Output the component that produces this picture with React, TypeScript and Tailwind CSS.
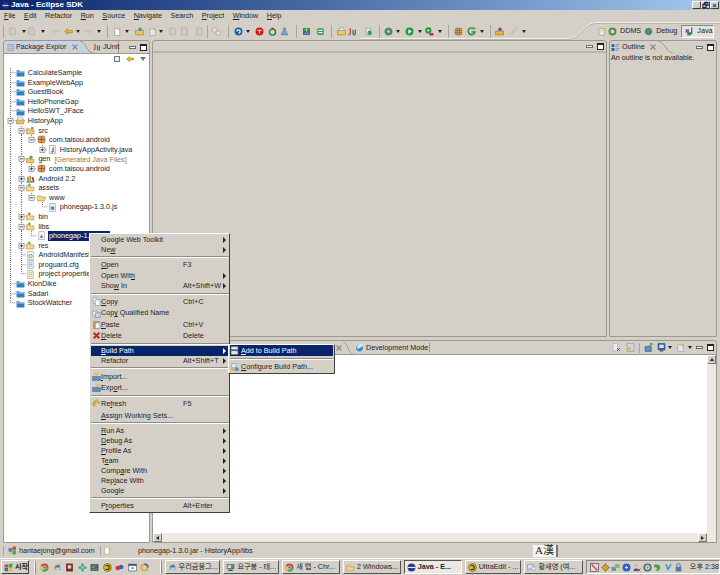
import type { ReactNode } from 'react';

const icons: Record<string, ReactNode> = {
  project: <><path d="M1 4h5l1 2h8v9H1z" fill="#2f7fc4" /><path d="M1 6h14v2H1z" fill="#9cc8ea" /></>,
  projectOpen: <><path d="M3 2h9v6H3z" fill="#fff" stroke="#7a8a9a" /><path d="M1 7h14l-2 7H1z" fill="#e9c45c" stroke="#8a7a3a" /></>,
  srcFolder: <><path d="M1 5h5l1 2h7v7H1z" fill="#f0cc70" stroke="#9a7a30" /><circle cx="11" cy="4" r="2.5" fill="#d8862c" /></>,
  genFolder: <><path d="M1 6h5l1 2h7v6H1z" fill="#f0cc70" stroke="#9a7a30" /><circle cx="9" cy="4" r="3" fill="#6ea040" /></>,
  folder: <><path d="M1 5h5l1 2h7v7H1z" fill="#f3d88a" stroke="#a08a40" /><circle cx="6" cy="3.5" r="2.4" fill="#7aa850" /></>,
  plainFolder: <path d="M1 5h5l1 2h8l-2 7H1z" fill="#f3d88a" stroke="#a08a40" />,
  pkg: <><rect x="2" y="2" width="12" height="12" rx="3" fill="#d99a5a" stroke="#8a4a1a" /><path d="M8 2v12M2 8h12" stroke="#7a3a10" /></>,
  java: <><path d="M3 1h10v14H3z" fill="#fff" stroke="#8a7a40" /><path d="M9 4v7q0 2-3 1" fill="none" stroke="#2a4a9a" strokeWidth="2" /></>,
  js: <><path d="M3 1h10v14H3z" fill="#eef4fa" stroke="#7a8aa0" /><path d="M5 6h6v6H5z" fill="#4a8ac8" /></>,
  jar: <><path d="M3 1h10v14H3z" fill="#fff" stroke="#8a8a9a" /><path d="M5 12l3-6 3 6z" fill="#5a6a9a" /></>,
  lib: <><path d="M1 13h14v2H1z" fill="#3a6a9a" /><path d="M2 5h3v8H2z" fill="#7a9a3a" /><path d="M6 3h3v10H6z" fill="#c88a2a" /><path d="M10 6l3-1 2 8h-3z" fill="#a03a2a" /></>,
  xml: <><path d="M3 1h10v14H3z" fill="#fff" stroke="#8a9a8a" /><circle cx="8" cy="9" r="3" fill="none" stroke="#4a9a4a" strokeWidth="1.6" /></>,
  file: <><path d="M3 1h10v14H3z" fill="#eaf0f8" stroke="#8a9ab0" /><path d="M5 5h6M5 8h6M5 11h6" stroke="#7a8ab0" /></>,
  prop: <><path d="M3 1h10v14H3z" fill="#f8f0d8" stroke="#a09a70" /><path d="M5 5h6M5 8h6M5 11h6" stroke="#b0a060" /></>,
  grayDoc: <path d="M3 2h8l2 2v10H3z" fill="#cfccc4" stroke="#a8a49c" />,
  grayArrow: <path d="M2 8l5-4v2.5h7v3H7V12z" fill="#c4c0b8" />,
  grayArrowR: <path d="M14 8l-5-4v2.5H2v3h7V12z" fill="#c4c0b8" />,
  yellowArrow: <path d="M1 8l6-5v3h8v4H7v3z" fill="#e8b830" stroke="#a07a10" />,
  newFile: <><path d="M3 3h9v12H3z" fill="#fff" stroke="#8a8a7a" /><path d="M11 1l1 2 2 1-2 1-1 2-1-2-2-1 2-1z" fill="#e8b820" /></>,
  pkgNew: <><path d="M1 6h14v8H1z" fill="#e9c45c" stroke="#8a7a3a" /><circle cx="9" cy="4" r="3" fill="#4a8ac8" /></>,
  fileNew: <><path d="M3 3h10v12H3z" fill="#dfe8f2" stroke="#8a9ab0" /><path d="M11 1l1 2 2 1-2 1-1 2-1-2-2-1 2-1z" fill="#e8b820" /></>,
  grayBoxes: <path d="M1 2h8v7H1zM7 7h8v7H7z" fill="#e4e2dc" stroke="#a4a09a" />,
  blue: <><circle cx="8" cy="8" r="7" fill="#1f5fa8" /><path d="M5 8a3 3 0 1 1 3 3" fill="none" stroke="#fff" strokeWidth="2" /></>,
  red: <><circle cx="8" cy="8" r="7" fill="#d01818" /><path d="M4 6h8M8 6v6" stroke="#fff" strokeWidth="1.5" /></>,
  greenRing: <><circle cx="8" cy="9" r="5.5" fill="none" stroke="#1a8a3a" strokeWidth="2.5" /><circle cx="8" cy="3" r="2" fill="#d03020" /></>,
  flask: <><path d="M6 2h4v4l4 8H2l4-8z" fill="#7aa0d0" stroke="#4a6a9a" /></>,
  addGreen: <><path d="M2 2h12v12H2z" fill="#2a5a8a" /><path d="M8 1v8M4 5h8" stroke="#8ad04a" strokeWidth="2" /><path d="M4 11h8" stroke="#fff" /></>,
  dev: <><rect x="2" y="2" width="12" height="12" rx="2" fill="#3a9a5a" /><path d="M4 6h8M4 10h8" stroke="#e8f0d0" strokeWidth="2" /></>,
  suitcase: <><path d="M1 6h14v8H1z" fill="#e8c860" stroke="#8a7a30" /><path d="M4 2h8v4H4z" fill="#fff" stroke="#6a8aaa" /></>,
  ju: <><path d="M4 2v9q0 3-3 2" fill="none" stroke="#d04030" strokeWidth="2.4" /><path d="M9 5v7q0 2 2 2t2-2V5" fill="none" stroke="#2a8a3a" strokeWidth="2.4" /></>,
  manGreen: <><path d="M3 2h9v12H3z" fill="#dfe8f2" stroke="#7a8a9a" /><circle cx="10" cy="10" r="4" fill="#3a9a5a" /></>,
  gear: <><circle cx="8" cy="8" r="6" fill="#5a9a7a" stroke="#2a5a4a" strokeDasharray="2 1" strokeWidth="2" /><circle cx="8" cy="8" r="2" fill="#d8e8c8" /></>,
  play: <><circle cx="8" cy="8" r="7" fill="#1f9a3a" /><path d="M6 4l6 4-6 4z" fill="#fff" /></>,
  runExt: <><circle cx="6" cy="6" r="5.5" fill="#1f9a3a" /><path d="M4.500 3.500l4 2.500-4 2.500z" fill="#fff" /><path d="M8 11h7v4H8z" fill="#c02020" /></>,
  grid: <><rect x="2" y="2" width="12" height="12" rx="3" fill="#d8a860" stroke="#8a5a20" /><path d="M6 2v12M10 2v12M2 6h12M2 10h12" stroke="#8a4a20" /></>,
  pkgView: <><path d="M2 1h12v14H2z" fill="#c8d0da" stroke="#6a7a9a" /><path d="M4 4h3v3H4zM4 9h3v3H4z" fill="#d89a3a" /><path d="M9 5h4M9 10h4" stroke="#3a5a9a" /></>,
  gColor: <><path d="M13 4a6 6 0 1 0 1 5H8" fill="none" stroke="#2a8a3a" strokeWidth="2.6" /><path d="M12 1h3v3z" fill="#d04030" /></>,
  briefcase: <><path d="M1 7h14v7H1z" fill="#e8b830" stroke="#8a6a20" /><circle cx="9" cy="4" r="3" fill="#6a4ab0" /></>,
  brush: <><path d="M2 14l3-5 3 3z" fill="#e8c050" /><path d="M6 8l7-7 2 2-7 7z" fill="#e8dcb0" stroke="#a09a70" /></>,
  persp: <><path d="M2 3h9v11H2z" fill="#fff" stroke="#7a7a6a" /><path d="M4 6h5M4 9h5" stroke="#5a8aba" /><path d="M12 1l1 2 2 1-2 1-1 2-1-2-2-1 2-1z" fill="#e8b820" /></>,
  ddms: <><circle cx="8" cy="8" r="7" fill="#5a8a4a" /><circle cx="8" cy="8" r="3.500" fill="#d8d4c8" /></>,
  debug: <><circle cx="8" cy="8" r="5" fill="#5a9a6a" stroke="#2a6a5a" strokeDasharray="2 1" strokeWidth="3" /></>,
  persJava: <><path d="M1 4h6v6H1z" fill="#7a5ab0" /><path d="M4 9h6v6H4z" fill="#3a8a4a" /><path d="M12 1v9q0 3-3 2" fill="none" stroke="#2a4aa0" strokeWidth="2" /></>,
  outline: <><path d="M1 2h5v5H1zM1 9h5v5H1z" fill="#2a5ab0" /><path d="M8 3h7M8 6h5M8 10h7M8 13h5" stroke="#6a8ac0" strokeWidth="1.500" /></>,
  copy: <><path d="M2 1h7v10H2z" fill="#e8eef8" stroke="#7a8aa8" /><path d="M6 5h8v10H6z" fill="#fff" stroke="#7a8aa8" /></>,
  copyQ: <><path d="M1 4h9v8H1z" fill="#e8eef8" stroke="#7a8aa8" /><path d="M6 7h9v8H6z" fill="#c8d8ea" stroke="#5a7a9a" /></>,
  paste: <><path d="M3 3h10v12H3z" fill="#d8a860" stroke="#8a6a30" /><path d="M6 5h8v10H6z" fill="#f0f4fa" stroke="#7a8aa8" /></>,
  del: <path d="M3 3l10 10M13 3L3 13" stroke="#d02020" strokeWidth="3.600" />,
  imp: <><path d="M1 8h14v7H1z" fill="#5a92c8" stroke="#3a6a9a" /><path d="M4 1l4 5 4-5" fill="none" stroke="#e8b830" strokeWidth="2" /></>,
  exp: <><path d="M1 8h14v7H1z" fill="#5a92c8" stroke="#3a6a9a" /><path d="M8 7l4-5M9 2h3v3" fill="none" stroke="#e8b830" strokeWidth="2" /></>,
  refresh: <><path d="M8 1l6 6-3 1-3-3-3 3 2 2-3 3-3-5z" fill="#e8b830" stroke="#9a7a20" /></>,
  addPath: <><path d="M2 1h12v14H2z" fill="#f0e8c8" stroke="#7a7a6a" /><path d="M2 6h12v3H2z" fill="#3a5a9a" /></>,
  confPath: <><path d="M3 1h8v7H3z" fill="#e8eef8" stroke="#7a8aa8" /><circle cx="5" cy="11" r="3.500" fill="#e8b830" /><circle cx="12" cy="11" r="3.500" fill="#5a92c8" /></>,
  globe: <><circle cx="8" cy="9" r="6" fill="#3a8ac8" /><path d="M4 5q8-6 11-2-3 5-11 8z" fill="#d8e8f4" /></>,
  clearDoc: <><path d="M2 1h8v13H2z" fill="#e8eef8" stroke="#9aa8b8" /><path d="M9 9l5 5M14 9l-5 5" stroke="#4a4a4a" strokeWidth="1.500" /></>,
  lockDoc: <><path d="M2 1h12v14H2z" fill="#c8d8ea" stroke="#7a8aa8" /><rect x="3" y="7" width="6" height="6" fill="#e8b830" /></>,
  pin: <><path d="M2 6h11v9H2z" fill="#5a92c8" stroke="#2a5a8a" /><path d="M8 6l6-5M11 1h3v3" fill="none" stroke="#2a8a3a" strokeWidth="1.600" /></>,
  monitor: <><path d="M2 1h12v11H2z" fill="#2a5ab0" stroke="#1a3a7a" /><path d="M4 3h8v6H4z" fill="#d8e4f4" /><path d="M5 14h6" stroke="#444" strokeWidth="2" /></>,
  gmail: <><path d="M1 4h6v6H1z" fill="#3a7ad8" /><path d="M8 1h6v6H8z" fill="#d84030" /><path d="M8 8h6v7H8z" fill="#3aa84a" /><path d="M2 11h5v4H2z" fill="#e8c030" /></>,
  tip: <><path d="M3 2h8v13H3z" fill="#fff" stroke="#9a9a8a" /><path d="M13 2l1 2 2 1-2 1-1 2-1-2-2-1 2-1z" fill="#e8c040" /></>,
  winFlag: <><path d="M1 3l6-1v6H1z" fill="#d84030" /><path d="M8 2l7-1v7H8z" fill="#3aa84a" /><path d="M1 9h6v6l-6-1z" fill="#2a6ad0" /><path d="M8 9h7v6l-7-1z" fill="#e8c030" /></>,
  chrome: <><circle cx="8" cy="8" r="7" fill="#d84030" /><path d="M8 8L15 8A7 7 0 0 1 5 14z" fill="#3aa84a" /><path d="M8 8L1 5A7 7 0 0 0 5 14z" fill="#e8c030" /><circle cx="8" cy="8" r="3" fill="#3a7ad8" stroke="#fff" /></>,
  ie: <><path d="M3 8a5 5 0 0 1 10 0H5a3.500 3.500 0 0 0 7 2h2a6 6 0 0 1-11-2z" fill="#2a7ad8" /><path d="M1 14Q3 4 14 1" fill="none" stroke="#e8a820" /></>,
  book: <><rect x="2" y="1" width="12" height="14" fill="#7a2a2a" /><rect x="5" y="4" width="6" height="6" fill="#e8d8b0" /></>,
  flower: <><path d="M8 1v14M1 8h14" stroke="#2aa8a0" strokeWidth="4" /><circle cx="8" cy="8" r="2" fill="#e8e040" /></>,
  films: <><rect x="1" y="2" width="14" height="12" fill="#3a5a5a" /><path d="M3 5h10M3 8h6M3 11h10" stroke="#a8d0b0" /></>,
  ultra: <><circle cx="8" cy="8" r="7" fill="#e8b820" stroke="#3a3a20" /><path d="M5 5q6-2 6 3t-6 3" fill="none" stroke="#2a2a10" strokeWidth="2" /></>,
  swirl: <><circle cx="5" cy="9" r="4" fill="#d83040" /><circle cx="11" cy="7" r="4" fill="#3a5ad0" /></>,
  winBox: <><path d="M1 2h14v12H1z" fill="#fff" stroke="#3a3a3a" /><path d="M1 2h14v3H1z" fill="#2a4a90" /><path d="M5 9h6" stroke="#3a9a3a" strokeWidth="2" /></>,
  ring: <><circle cx="8" cy="8" r="5.500" fill="none" stroke="#e8a820" strokeWidth="3" /><path d="M8 2a6 6 0 0 1 6 6" fill="none" stroke="#2a6ad0" strokeWidth="3" /></>,
  pc: <><path d="M1 2h14v9H1z" fill="#5a7a9a" /><path d="M3 4h6v5H3z" fill="#d8e8a8" /><path d="M4 13h8" stroke="#333" strokeWidth="2" /></>,
  chat: <><path d="M1 3h10v7H5l-3 3v-3H1z" fill="#dfe8f8" stroke="#5a7ab0" /><path d="M8 7h7v5h-1v2l-2-2H8z" fill="#eef4fa" stroke="#7a9ac0" /></>,
  eclipse: <><circle cx="8" cy="8" r="7" fill="#2a3a8a" /><path d="M1 7h14v2H1z" fill="#e8e8f0" /></>,
  trayRed: <><rect x="1" y="1" width="14" height="14" fill="#f0d8d8" stroke="#2a2a2a" /><path d="M3 3l10 10" stroke="#d02020" strokeWidth="2" /></>,
  trayCross: <path d="M8 1l3 4 4 3-4 3-3 4-3-4-4-3 4-3z" fill="#e8a020" stroke="#5a3a10" />,
  trayNet: <><rect x="1" y="7" width="8" height="7" fill="#5a92b8" /><rect x="7" y="2" width="8" height="7" fill="#7ab86a" /></>,
  trayBlue: <><circle cx="8" cy="8" r="7" fill="#2a5ad0" /><path d="M9 3L5 9h3l-1 4 4-6H8z" fill="#fff" /></>,
  trayUser: <><circle cx="7" cy="4" r="3" fill="#e8b080" /><path d="M2 14q5-9 10 0z" fill="#2a5ab0" /><path d="M10 10l5 5M15 10l-5 5" stroke="#d02020" strokeWidth="1.500" /></>,
  trayGray: <><circle cx="8" cy="8" r="6" fill="none" stroke="#4a6a6a" strokeWidth="2.600" /><circle cx="8" cy="8" r="2" fill="#7a9a8a" /></>,
  trayLeaf: <path d="M3 2q10 0 10 6t-9 6q6-6 1-6T3 2z" fill="#4aa04a" />,
  trayV: <path d="M2 2l5 12L14 2h-3l-4 7-2-7z" fill="#3a8ad8" />,
  trayLock: <><path d="M5 7V4a3 3 0 0 1 6 0v3" fill="none" stroke="#5a6a8a" strokeWidth="1.600" /><rect x="3" y="7" width="10" height="8" fill="#4a7ab0" /></>,
};

function Ico({ k, size = 9 }: { k: string; size?: number }) {
  return (
    <svg width={size} height={size} viewBox="0 0 16 16" className="shrink-0">
      {icons[k]}
    </svg>
  );
}

function Caret() {
  return (
    <svg width="4" height="3" viewBox="0 0 4 3" className="shrink-0">
      <path d="M0 0h4L2 3z" fill="#222" />
    </svg>
  );
}

// small X of a closable view tab
function CloseX() {
  return (
    <svg width="6" height="6" viewBox="0 0 6 6" className="shrink-0">
      <path d="M0.500 0.500l5 5M5.500 0.500l-5 5" stroke="#8a8a84" strokeWidth="1.200" />
    </svg>
  );
}

// sloping right edge of a selected tab
function TabEnd({ w, fill }: { w: number; fill: string }) {
  return (
    <svg width={w} height="12" viewBox={`0 0 ${w} 12`} className="shrink-0">
      <path d={`M0 0C${w * 0.45} 0 ${w * 0.55} 12 ${w} 12H0Z`} fill={fill} />
      <path d={`M0 0C${w * 0.45} 0 ${w * 0.55} 12 ${w} 12`} fill="none" stroke="#9c9890" />
    </svg>
  );
}

const toolbar: [number, string][] = [
  [3, '|'], [12, 'grayDoc'], [24, 'v'], [31, 'grayDoc'], [43, 'v'], [55, 'grayArrow'], [68, 'yellowArrow'], [78, 'v'],
  [88, 'grayArrowR'], [99, 'v'], [107, '|'], [117, 'newFile'], [127, 'v'], [139, 'pkgNew'], [152, 'fileNew'], [161, 'v'],
  [172, 'grayDoc'], [184, 'grayDoc'], [199, 'grayDoc'], [207, '|'], [216, 'grayBoxes'], [228, '|'], [238, 'blue'], [248, 'v'],
  [259, 'red'], [272, 'greenRing'], [284, 'flask'], [296, '|'], [306, 'addGreen'], [320, 'dev'], [331, '|'], [341, 'suitcase'],
  [352, 'ju'], [368, 'manGreen'], [379, '|'], [388, 'gear'], [398, 'v'], [409, 'play'], [420, 'v'], [429, 'runExt'], [440, 'v'],
  [448, '|'], [458, 'grid'], [471, 'gColor'], [482, 'v'], [490, '|'], [499, 'briefcase'], [513, 'brush'], [524, 'v'],
];

function Toolbar() {
  return (
    <div className="flex h-[18px] items-center">
      {toolbar.map(([x, k], i) => {
        const w = k === '|' ? 1 : k === 'v' ? 4 : 9;
        const prev = i === 0 ? null : toolbar[i - 1];
        const prevW = prev ? (prev[1] === '|' ? 1 : prev[1] === 'v' ? 4 : 9) : 0;
        const prevLeft = prev ? prev[0] - prevW / 2 : 0;
        const gap = x - w / 2 - (prevLeft + prevW);
        return (
          <span key={i} className="flex items-center" style={{ marginLeft: gap }}>
            {k === '|' ? <span className="h-[13px] w-px bg-[#a8a49c]" /> : k === 'v' ? <Caret /> : <Ico k={k} />}
          </span>
        );
      })}
    </div>
  );
}

function MinMax() {
  return (
    <div className="flex items-center gap-[4px] pr-[2px]">
      <span className="h-[3px] w-[7px] border border-[#6a6a6a] bg-white" />
      <span className="h-[7px] w-[7px] border border-[#222] border-t-2 bg-white" />
    </div>
  );
}

type Row = {
  t: string;
  guides?: boolean[];
  node?: 'plus' | 'minus' | 'leaf';
  last?: boolean;
  icon: string;
  note?: string;
  selected?: boolean;
};

const rows: Row[] = [
  { t: 'CalculateSample', icon: 'project' },
  { t: 'ExampleWebApp', icon: 'project' },
  { t: 'GuestBook', icon: 'project' },
  { t: 'HelloPhoneGap', icon: 'project' },
  { t: 'HelloSWT_JFace', icon: 'project' },
  { t: 'HistoryApp', icon: 'projectOpen', node: 'minus' },
  { t: 'src', icon: 'srcFolder', node: 'minus', guides: [true] },
  { t: 'com.taisou.android', icon: 'pkg', node: 'minus', guides: [true, true], last: true },
  { t: 'HistoryAppActivity.java', icon: 'java', node: 'plus', guides: [true, true, false], last: true },
  { t: 'gen', note: '[Generated Java Files]', icon: 'genFolder', node: 'minus', guides: [true] },
  { t: 'com.taisou.android', icon: 'pkg', node: 'plus', guides: [true, true], last: true },
  { t: 'Android 2.2', icon: 'lib', node: 'plus', guides: [true] },
  { t: 'assets', icon: 'folder', node: 'minus', guides: [true] },
  { t: 'www', icon: 'plainFolder', node: 'minus', guides: [true, true], last: true },
  { t: 'phonegap-1.3.0.js', icon: 'js', guides: [true, true, false], last: true },
  { t: 'bin', icon: 'folder', node: 'plus', guides: [true] },
  { t: 'libs', icon: 'folder', node: 'minus', guides: [true] },
  { t: 'phonegap-1.3.0.jar', icon: 'jar', guides: [true, true], last: true, selected: true },
  { t: 'res', icon: 'folder', node: 'plus', guides: [true] },
  { t: 'AndroidManifest.xml', icon: 'xml', guides: [true] },
  { t: 'proguard.cfg', icon: 'file', guides: [true] },
  { t: 'project.properties', icon: 'prop', guides: [true], last: true },
  { t: 'KlonDike', icon: 'project' },
  { t: 'Sadari', icon: 'project' },
  { t: 'StockWatcher', icon: 'project', last: true },
];

function Connector({ guide, end, node, last }: { guide?: boolean; end?: boolean; node?: Row['node']; last?: boolean }) {
  const box = node === 'plus' || node === 'minus';
  return (
    <svg width="10.7" height="9.6" viewBox="0 0 10.7 9.6" className="shrink-0">
      {guide && <path d="M5.500 0V9.600" stroke="#777" strokeDasharray="1 1" />}
      {end && <path d={last ? 'M5.500 0V4.800H10.700' : 'M5.500 0V9.600M5.500 4.800H10.700'} fill="none" stroke="#777" strokeDasharray="1 1" />}
      {box && <rect x="3" y="2.300" width="5" height="5" fill="#fff" stroke="#888" strokeWidth="0.8" />}
      {box && <path d="M4 4.800h3" stroke="#222" strokeWidth="0.8" />}
      {node === 'plus' && <path d="M5.500 3.300v3" stroke="#222" strokeWidth="0.8" />}
    </svg>
  );
}

function Tree() {
  return (
    <div className="flex flex-col pl-px">
      {rows.map((r, i) => (
        <div key={i} className="flex h-[9.6px] items-center">
          {(r.guides ?? []).map((g, j) => (
            <Connector key={j} guide={g} />
          ))}
          <Connector end node={r.node} last={r.last} />
          <Ico k={r.icon} />
          <span className={`ml-[2px] whitespace-nowrap px-px leading-[9.6px] ${r.selected ? 'bg-[#0a246a] text-white' : ''}`}>{r.t}</span>
          {r.note && <span className="ml-[3px] whitespace-nowrap text-[#8a7a50]">{r.note}</span>}
        </div>
      ))}
    </div>
  );
}

type MenuEntry = { l?: string; u?: string; s?: string; sub?: boolean; icon?: string; hi?: boolean; h?: string };

const menu: MenuEntry[] = [
  { l: 'Google Web Toolkit', sub: true },
  { l: 'Ne', u: 'w', sub: true },
  {},
  { u: 'O', l: 'pen', s: 'F3', h: 'h-[10.500px]' },
  { l: 'Open Wit', u: 'h', sub: true, h: 'h-[10.500px]' },
  { l: 'Sho', u: 'w', s: 'Alt+Shift+W', sub: true, h: 'h-[10.500px]' },
  {},
  { u: 'C', l: 'opy', s: 'Ctrl+C', icon: 'copy', h: 'h-[11.300px]' },
  { l: 'Cop', u: 'y', s: '', icon: 'copyQ', h: 'h-[11.300px]' },
  { u: 'P', l: 'aste', s: 'Ctrl+V', icon: 'paste', h: 'h-[11.300px]' },
  { u: 'D', l: 'elete', s: 'Delete', icon: 'del', h: 'h-[11.300px]' },
  {},
  { u: 'B', l: 'uild Path', sub: true, hi: true },
  { l: 'Refactor', s: 'Alt+Shift+T', sub: true },
  {},
  { u: 'I', l: 'mport...', icon: 'imp', h: 'h-[11.300px]' },
  { l: 'Exp', u: 'o', s: '', icon: 'exp', h: 'h-[11.300px]' },
  {},
  { l: 'Re', u: 'f', s: 'F5', icon: 'refresh', h: 'h-[11.300px]' },
  { u: 'A', l: 'ssign Working Sets...', h: 'h-[11.300px]' },
  {},
  { u: 'R', l: 'un As', sub: true },
  { u: 'D', l: 'ebug As', sub: true },
  { u: 'P', l: 'rofile As', sub: true },
  { l: 'T', u: 'e', sub: true },
  { l: 'Comp', u: 'a', sub: true },
  { l: 'Rep', u: 'l', sub: true },
  { l: 'Google', sub: true },
  {},
  { l: 'P', u: 'r', s: 'Alt+Enter' },
];

const tails: Record<string, string> = {
  'Sho': ' In',
  'Cop': ' Qualified Name',
  'Exp': 'rt...',
  'Re': 'resh',
  'T': 'am',
  'Comp': 're With',
  'Rep': 'ace With',
  'P': 'operties',
};

function MenuRow({ e }: { e: MenuEntry }) {
  if (!e.l && !e.u) {
    return <div className="my-[1.400px] h-[2px] border-t border-b border-t-[#8f8c85] border-b-white" />;
  }
  const first = e.u && e.l && e.u === e.u.toUpperCase();
  return (
    <div className={`flex items-center pr-[3px] ${e.h ?? 'h-[10px]'} ${e.hi ? 'bg-[#0a246a] text-white' : ''}`}>
      <span className="flex w-[10px] justify-center">{e.icon && <Ico k={e.icon} />}</span>
      <span className="w-[82px] whitespace-nowrap">
        {first ? (
          <>
            <u>{e.u}</u>
            {e.l}
          </>
        ) : (
          <>
            {e.l}
            {e.u && <u>{e.u}</u>}
            {e.l && tails[e.l]}
          </>
        )}
      </span>
      <span className="flex-1 whitespace-nowrap">{e.s}</span>
      {e.sub && <span className="h-0 w-0 border-y-[3px] border-l-[3px] border-y-transparent border-l-current" />}
    </div>
  );
}

function ContextMenu() {
  return (
    <div className="absolute left-[89px] top-[233px] w-[141px] border border-t-white border-l-white border-r-[#404040] border-b-[#404040] bg-[#d4d0c8] pb-[2px] pl-px pt-px text-[#222]">
      {menu.map((e, i) => (
        <MenuRow key={i} e={e} />
      ))}
    </div>
  );
}

function SubMenu() {
  return (
    <div className="absolute left-[228px] top-[344px] w-[107px] border border-t-white border-l-white border-r-[#404040] border-b-[#404040] bg-[#d4d0c8] px-px text-[#222]">
      <div className="flex h-[11px] items-center gap-[2px] bg-[#0a246a] text-white">
        <Ico k="addPath" />
        <span className="whitespace-nowrap">
          <u>A</u>dd to Build Path
        </span>
      </div>
      <div className="my-[1.500px] h-[2px] border-t border-b border-t-[#8f8c85] border-b-white" />
      <div className="flex h-[12px] items-center gap-[2px]">
        <Ico k="confPath" />
        <span className="whitespace-nowrap">
          <u>C</u>onfigure Build Path...
        </span>
      </div>
    </div>
  );
}

function Task({ icon, label, w, active }: { icon: string; label: string; w: string; active?: boolean }) {
  return (
    <div
      className={`flex h-[14px] items-center gap-[2px] overflow-hidden whitespace-nowrap border px-[2px] ${w} ${
        active
          ? 'border-t-[#555] border-l-[#555] border-r-white border-b-white bg-[#ece9e2] font-bold'
          : 'border-t-white border-l-white border-r-[#555] border-b-[#555]'
      }`}
    >
      <Ico k={icon} />
      <span>{label}</span>
    </div>
  );
}

const quick = ['chrome', 'ie', 'book', 'flower', 'films', 'ultra', 'swirl', 'winBox', 'ring'];
const tray = ['trayCross', 'trayNet', 'trayBlue', 'trayUser', 'trayGray', 'trayLeaf', 'trayV', 'trayLock'];

export default function App() {
  return (
    <div className="relative flex h-[575px] w-[720px] flex-col overflow-hidden bg-[#d4d0c8] font-['Liberation_Sans','Noto_Sans_CJK_KR',sans-serif] text-[7.200px] leading-none text-[#222]">
      <div className="flex h-[10px] items-center justify-between bg-gradient-to-r from-[#0a246a] to-[#a6caf0] pl-[2px] pr-px text-[8px] font-bold text-white">
        <div className="flex items-center gap-[2px]">
          <Ico k="eclipse" size={7} />
          <span>Java - Eclipse SDK</span>
        </div>
        <div className="flex text-[#222]">
          {['_', '🗗', '×'].map((c) => (
            <span key={c} className="flex h-[8px] w-[9px] items-center justify-center border border-t-white border-l-white border-r-[#404040] border-b-[#404040] bg-[#d4d0c8] text-[7px]">
              {c}
            </span>
          ))}
        </div>
      </div>

      <div className="flex h-[12px] items-center gap-[8.500px] pl-[4px]">
        {[['F', 'ile'], ['E', 'dit'], ['', 'Refactor'], ['R', 'un'], ['S', 'ource'], ['N', 'avigate'], ['', 'Search'], ['P', 'roject'], ['W', 'indow'], ['H', 'elp']].map(([u, r]) => (
          <span key={r} className="whitespace-nowrap">
            <u>{u}</u>
            {r}
          </span>
        ))}
      </div>

      <div className="relative">
        <svg width="720" height="18" viewBox="0 0 720 18" className="absolute left-0 top-0">
          <path d="M360 16.500H568C582 16.500 582 0.500 597 0.500H720" fill="none" stroke="#f4f2ec" />
          <path d="M360 17.500H568C582 17.500 582 1.500 597 1.500H720" fill="none" stroke="#b8b4ac" />
        </svg>
        <div className="relative">
          <Toolbar />
        </div>
        <div className="absolute left-[598px] top-0 flex h-[18px] items-center">
          <Ico k="persp" />
          <div className="ml-[1px] flex items-center gap-[3px]">
            <Ico k="ddms" />
            DDMS
          </div>
          <div className="ml-[3px] flex items-center gap-[3px]">
            <Ico k="debug" />
            Debug
          </div>
          <div className="ml-[4px] flex h-[13px] w-[33px] items-center gap-[3px] border border-t-[#888] border-l-[#888] border-r-white border-b-white bg-[#e6e3dc] px-[3px]">
            <Ico k="persJava" />
            Java
          </div>
        </div>
      </div>

      <div className="flex min-h-0 flex-1 gap-[2px] pl-[3px] pr-[3px]">
        <section className="flex w-[147px] flex-col overflow-hidden rounded-t-[3px] border border-[#9c9890]">
          <div className="flex h-[12px] items-center justify-between">
            <div className="flex h-full">
              <div className="flex w-[76px] items-center gap-[2px] rounded-tl-[3px] bg-gradient-to-b from-[#c3d4ee] to-[#d0d0cc] pl-[3px]">
                <Ico k="pkgView" size={7} />
                <span className="whitespace-nowrap">Package Explor</span>
                <span className="ml-[4px]">
                  <CloseX />
                </span>
              </div>
              <TabEnd w={13} fill="#c9d0da" />
              <div className="flex w-[26px] items-center gap-[2px] border-r border-[#9c9890]">
                <Ico k="ju" size={8} />
                JUnit
              </div>
            </div>
            <MinMax />
          </div>
          <div className="flex-1 overflow-hidden border-t border-[#9c9890] bg-white">
            <div className="flex h-[10px] items-center justify-end gap-[6px] pr-[3px]">
              <span className="h-[6px] w-[6px] border border-[#6a7a8a] bg-[#e8eef6]" />
              <Ico k="yellowArrow" size={8} />
              <span className="h-0 w-0 border-x-[3px] border-t-[4px] border-x-transparent border-t-[#777]" />
            </div>
            <div className="h-[4px]" />
            <Tree />
          </div>
        </section>

        <div className="flex min-w-0 flex-1 flex-col gap-[3px]">
          <div className="flex h-[297px] gap-[2px]">
            <section className="flex w-[455px] flex-col rounded-t-[3px] border border-[#9c9890]">
              <div className="flex h-[12px] items-center justify-end border-b-2 border-[#b8b4ac]">
                <MinMax />
              </div>
              <div className="flex-1" />
            </section>
            <section className="flex min-w-0 flex-1 flex-col rounded-t-[3px] border border-[#9c9890]">
              <div className="flex h-[12px] items-center justify-between">
                <div className="flex h-full items-center">
                  <div className="flex h-full items-center gap-[2px] pl-[1px]">
                    <Ico k="outline" />
                    <span>Outline</span>
                    <span className="ml-[3px] mr-[2px]">
                      <CloseX />
                    </span>
                  </div>
                  <TabEnd w={15} fill="#d4d0c8" />
                </div>
                <MinMax />
              </div>
              <div className="whitespace-nowrap pl-[1px] pt-[1px]">An outline is not available.</div>
            </section>
          </div>

          <section className="flex min-h-0 flex-1 flex-col rounded-t-[3px] border border-[#9c9890]">
            <div className="flex h-[13px] items-center justify-between">
              <div className="flex h-full items-center">
                <span className="ml-[183px]">
                  <CloseX />
                </span>
                <span className="ml-[1px]">
                  <TabEnd w={10} fill="#d4d0c8" />
                </span>
                <div className="ml-[2px] flex items-center gap-[2px] border-r border-[#9c9890] pr-[1px]">
                  <Ico k="globe" />
                  <span className="whitespace-nowrap">Development Mode</span>
                </div>
              </div>
              <div className="flex items-center">
                <Ico k="clearDoc" />
                <span className="ml-[5px]">
                  <Ico k="lockDoc" />
                </span>
                <span className="ml-[4px] h-[10px] w-px bg-[#a8a49c]" />
                <span className="ml-[4px]">
                  <Ico k="pin" />
                </span>
                <span className="ml-[4px]">
                  <Ico k="monitor" />
                </span>
                <span className="ml-[2px]">
                  <Caret />
                </span>
                <span className="ml-[4px]">
                  <Ico k="fileNew" />
                </span>
                <span className="ml-[3px] mr-[4px]">
                  <Caret />
                </span>
                <MinMax />
              </div>
            </div>
            <div className="flex min-h-0 flex-1 flex-col border-t border-[#9c9890]">
              <div className="flex min-h-0 flex-1 bg-white">
                <div className="flex-1" />
                <div className="w-[9px] bg-[#ece9e2]">
                  <div className="flex h-[9px] items-center justify-center border border-t-white border-l-white border-r-[#777] border-b-[#777] bg-[#d4d0c8]">
                    <span className="h-0 w-0 border-x-[2.500px] border-b-[3px] border-x-transparent border-b-[#222]" />
                  </div>
                </div>
              </div>
              <div className="flex h-[9px] justify-between bg-[#ece9e2]">
                <div className="flex w-[9px] items-center justify-center border border-t-white border-l-white border-r-[#777] border-b-[#777] bg-[#d4d0c8]">
                  <span className="h-0 w-0 border-y-[2.500px] border-r-[3px] border-y-transparent border-r-[#222]" />
                </div>
                <div className="mr-[9px] flex w-[9px] items-center justify-center border border-t-white border-l-white border-r-[#777] border-b-[#777] bg-[#d4d0c8]">
                  <span className="h-0 w-0 border-y-[2.500px] border-l-[3px] border-y-transparent border-l-[#222]" />
                </div>
              </div>
            </div>
          </section>
        </div>
      </div>

      <div className="flex h-[15px] items-center">
        <span className="ml-[3px] h-[10px] w-px bg-[#a8a49c]" />
        <span className="ml-[4px]">
          <Ico k="gmail" />
        </span>
        <span className="ml-[2px] w-[76px] whitespace-nowrap">hantaejong@gmail.com</span>
        <span className="ml-[5px] h-[10px] w-px bg-[#a8a49c]" />
        <span className="ml-[2px]">
          <Ico k="tip" />
        </span>
        <span className="ml-[26px] w-[280px] whitespace-nowrap">phonegap-1.3.0.jar - HistoryApp/libs</span>
        <div className="ml-[115px] flex h-[12px] w-[25px] items-center justify-center border-r-2 border-[#777] bg-[#f4f4f0] font-['Liberation_Serif','Noto_Sans_CJK_TC',serif] text-[11px] text-[#222]">
          A漢
        </div>
      </div>

      <div className="flex h-[17px] items-center gap-[3px] border-t border-white pl-px">
        <div className="flex h-[14px] w-[28px] items-center gap-[2px] whitespace-nowrap border border-t-white border-l-white border-r-[#404040] border-b-[#404040] pl-[2px] font-bold">
          <Ico k="winFlag" />
          시작
        </div>
        <span className="ml-[2px] h-[13px] w-[2px] border-x border-l-white border-r-[#888]" />
        <div className="flex w-[118px] items-center gap-[3.500px] pl-px">
          {quick.map((k) => (
            <Ico key={k} k={k} />
          ))}
        </div>
        <span className="h-[13px] w-[2px] border-x border-l-white border-r-[#888]" />
        <Task icon="ie" label="우리금융그..." w="w-[56px]" />
        <Task icon="pc" label="요구봉 - 테..." w="w-[56px]" />
        <Task icon="chrome" label="새 탭 - Chr..." w="w-[58px]" />
        <Task icon="plainFolder" label="2 Windows..." w="w-[58px]" />
        <Task icon="eclipse" label="Java - E..." w="w-[58px]" active />
        <Task icon="ultra" label="UltraEdit - ..." w="w-[57px]" />
        <Task icon="chat" label="황새영 (여..." w="w-[59px]" />
        <div className="flex h-[14px] flex-1 items-center gap-[1.500px] border border-t-[#888] border-l-[#888] border-r-white border-b-white pl-[3px]">
          <Ico k="trayRed" />
          {tray.map((k) => (
            <Ico key={k} k={k} />
          ))}
          <span className="ml-[5px] whitespace-nowrap">오후 2:38</span>
        </div>
      </div>

      <ContextMenu />
      <SubMenu />
    </div>
  );
}
